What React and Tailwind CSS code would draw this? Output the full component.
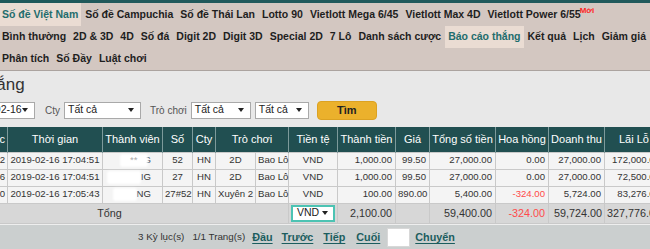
import React from "react";

const nav1 = ["Số đề Việt Nam", "Số đề Campuchia", "Số đề Thái Lan", "Lotto 90", "Vietlott Mega 6/45", "Vietlott Max 4D", "Vietlott Power 6/55"];
const nav2 = ["Bình thường", "2D & 3D", "4D", "Số đá", "Digit 2D", "Digit 3D", "Special 2D", "7 Lô", "Danh sách cược", "Báo cáo thắng", "Kết quả", "Lịch", "Giảm giá"];
const nav3 = ["Phân tích", "Số Đầy", "Luật chơi"];

const rows = [
  { id: "2551482", t: "2019-02-16 17:04:51", pre: "**", m: "G", blob: "w-[28px]", so: "52", cty: "HN", a: "2D", b: "Bao Lô", cur: "VND", tt: "1,000.00", gia: "99.50", tong: "27,000.00", hh: "0.00", neg: false, dt: "27,000.00", ll: "172,000.00" },
  { id: "2551486", t: "2019-02-16 17:04:51", pre: "", m: "IG", blob: "w-[34px]", so: "27", cty: "HN", a: "2D", b: "Bao Lô", cur: "VND", tt: "1,000.00", gia: "99.50", tong: "27,000.00", hh: "0.00", neg: false, dt: "27,000.00", ll: "72,500.00" },
  { id: "2551490", t: "2019-02-16 17:05:43", pre: "", m: "NG", blob: "w-[24px]", so: "27#52", cty: "HN", a: "Xuyên 2", b: "Bao Lô", cur: "VND", tt: "100.00", gia: "890.00", tong: "5,400.00", hh: "-324.00", neg: true, dt: "5,724.00", ll: "83,276.00" },
];

function Arrow() {
  return (
    <svg width="6" height="4" viewBox="0 0 6 4" className="shrink-0">
      <path d="M0 0H6L3 4Z" fill="#222" />
    </svg>
  );
}

function Select({ className, text }) {
  return (
    <div className={"h-[17px] bg-white border border-[#a9a9a9] flex items-center justify-between pl-[3px] pr-[6px] text-[10.5px] text-[#222] whitespace-nowrap overflow-hidden " + className}>
      <span>{text}</span>
      <Arrow />
    </div>
  );
}

function NavItem({ label, active, children }) {
  return (
    <span className={"h-full flex items-center px-[3px] whitespace-nowrap " + (active ? "bg-[#eadcd3] text-[#1f6d6d]" : "text-[#1e1e1e]")}>
      {label}
      {children}
    </span>
  );
}

const th = "border-x border-[#7d9a9b] font-normal text-center whitespace-nowrap overflow-hidden px-0";
const td = "border border-[#c9c9c9] px-[2px] whitespace-nowrap";

export default function App() {
  return (
    <div className="w-[650px] h-[249px] overflow-hidden bg-[#e8e8e8] [font-family:'Liberation_Sans',Arial,sans-serif]">
      <div className="h-[3px] bg-[#20595b]" />
      <div className="bg-[#d3c7c1] border-b border-[#aba39f] text-[10.5px] font-bold">
        <div className="flex h-[23px] items-center -ml-px gap-px">
          {nav1.map((n, i) => (
            <NavItem key={n} label={n} active={i === 0}>
              {i === 6 && <sup className="text-[8px] text-[#ff1f1f] -ml-[1px]">Mới</sup>}
            </NavItem>
          ))}
        </div>
        <div className="flex h-[22px] items-center -ml-px gap-px">
          {nav2.map((n) => (
            <NavItem key={n} label={n} active={n === "Báo cáo thắng"} />
          ))}
        </div>
        <div className="flex h-[22px] items-center -ml-px gap-px">
          {nav3.map((n) => (
            <NavItem key={n} label={n} />
          ))}
        </div>
      </div>

      <div className="overflow-hidden">
        <div className="-ml-[85px] h-[28px] leading-[28px] text-[17px] text-[#333] whitespace-nowrap">Báo cáo thắng</div>

        <div className="flex items-center h-[22px] -ml-[36px]">
          <Select className="w-[71px] shrink-0" text="2019-02-16" />
          <span className="ml-[10px] text-[10px] text-[#555]">Cty</span>
          <Select className="ml-[4px] w-[77px] shrink-0" text="Tất cả" />
          <span className="ml-[9px] text-[10px] text-[#555] whitespace-nowrap">Trò chơi</span>
          <Select className="ml-[4px] w-[60px] shrink-0" text="Tất cả" />
          <Select className="ml-[4px] w-[54px] shrink-0" text="Tất cả" />
          <button className="ml-[8px] w-[60px] h-[19px] shrink-0 rounded-[4px] bg-[#ebb12c] border border-[#dca222] text-[11px] font-bold text-[#222]">Tìm</button>
        </div>

        <div className="mt-[6px] -ml-[70px] w-[733px]">
          <table className="table-fixed border-collapse w-[733px] text-[#333]">
            <colgroup>
              <col className="w-[77px]" />
              <col className="w-[95px]" />
              <col className="w-[60px]" />
              <col className="w-[30px]" />
              <col className="w-[23px]" />
              <col className="w-[40px]" />
              <col className="w-[33px]" />
              <col className="w-[49px]" />
              <col className="w-[58px]" />
              <col className="w-[34px]" />
              <col className="w-[66px]" />
              <col className="w-[53px]" />
              <col className="w-[56px]" />
              <col className="w-[59px]" />
            </colgroup>
            <thead>
              <tr className="h-[25px] bg-[#214f51] text-white text-[11px]">
                <th className={th + " text-right pr-[2px]"}>Mã cược</th>
                <th className={th}>Thời gian</th>
                <th className={th}>Thành viên</th>
                <th className={th}>Số</th>
                <th className={th}>Cty</th>
                <th className={th} colSpan={2}>Trò chơi</th>
                <th className={th}>Tiền tệ</th>
                <th className={th}>Thành tiền</th>
                <th className={th}>Giá</th>
                <th className={th}>Tổng số tiền</th>
                <th className={th}>Hoa hồng</th>
                <th className={th}>Doanh thu</th>
                <th className={th}>Lãi Lỗ</th>
              </tr>
            </thead>
            <tbody>
              {rows.map((r) => (
                <tr key={r.id} className="h-[17px] bg-[#f4f4f4] text-[9.6px]">
                  <td className={td + " text-right"}>{r.id}</td>
                  <td className={td + " text-center px-0"}>{r.t}</td>
                  <td className={td + " px-0"}>
                    <div className="flex items-center justify-end pr-[9px]">
                      <span className={"h-[13px] bg-white blur-[1px] rounded-[3px] " + r.blob} />
                      {r.pre && <span className="text-[#aaa] mr-[6px] -ml-[18px] relative">{r.pre}</span>}
                      <span>{r.m}</span>
                    </div>
                  </td>
                  <td className={td + " text-center px-0"}>{r.so}</td>
                  <td className={td + " text-center px-0"}>{r.cty}</td>
                  <td className={td + " text-center px-0"}>{r.a}</td>
                  <td className={td + " text-left pl-[2px] pr-0"}>{r.b}</td>
                  <td className={td + " text-center"}>{r.cur}</td>
                  <td className={td + " text-right pr-[3px]"}>{r.tt}</td>
                  <td className={td + " text-right pr-[3px]"}>{r.gia}</td>
                  <td className={td + " text-right pr-[3px]"}>{r.tong}</td>
                  <td className={td + " text-right pr-[3px] " + (r.neg ? "text-[#ff4a4a]" : "")}>{r.hh}</td>
                  <td className={td + " text-right pr-[3px]"}>{r.dt}</td>
                  <td className={td + " text-right pr-[3px]"}>{r.ll}</td>
                </tr>
              ))}
              <tr className="h-[20px] bg-[#d7d7d7] text-[10.8px]">
                <td className={td + " text-center"} colSpan={7}>Tổng</td>
                <td className={td + " px-[1px]"}>
                  <div className="h-[17px] bg-white border-2 border-[#4cc3b3] flex items-center justify-between pl-[4px] pr-[5px] text-[10.5px] text-[#222]">
                    <span>VND</span>
                    <Arrow />
                  </div>
                </td>
                <td className={td + " text-right pr-[3px]"}>2,100.00</td>
                <td className={td}></td>
                <td className={td + " text-right pr-[3px]"}>59,400.00</td>
                <td className={td + " text-right pr-[3px] text-[#ff4a4a]"}>-324.00</td>
                <td className={td + " text-right pr-[2px]"}>59,724.00</td>
                <td className={td + " text-right pr-[2px]"}>327,776.00</td>
              </tr>
            </tbody>
          </table>

          <div className="h-[26px] bg-[#cbcfcf] border-t border-[#eeeeee] flex items-center justify-center whitespace-nowrap">
            <span className="text-[9.8px] text-[#333]">3 Kỳ lục(s)</span>
            <span className="ml-[8px] text-[9.8px] text-[#333]">1/1 Trang(s)</span>
            <a className="ml-[7px] text-[10.8px] font-bold text-[#1b5d5e] underline underline-offset-2">Đầu</a>
            <a className="ml-[9px] text-[10.8px] font-bold text-[#1b5d5e] underline underline-offset-2">Trước</a>
            <a className="ml-[10px] text-[10.8px] font-bold text-[#1b5d5e] underline underline-offset-2">Tiếp</a>
            <a className="ml-[11px] text-[10.8px] font-bold text-[#1b5d5e] underline underline-offset-2">Cuối</a>
            <input className="ml-[7px] w-[23px] h-[19px] bg-white border border-[#d8d8d8]" />
            <a className="ml-[5px] text-[10.8px] font-bold text-[#1b5d5e] underline underline-offset-2">Chuyển</a>
          </div>
        </div>
      </div>
    </div>
  );
}
